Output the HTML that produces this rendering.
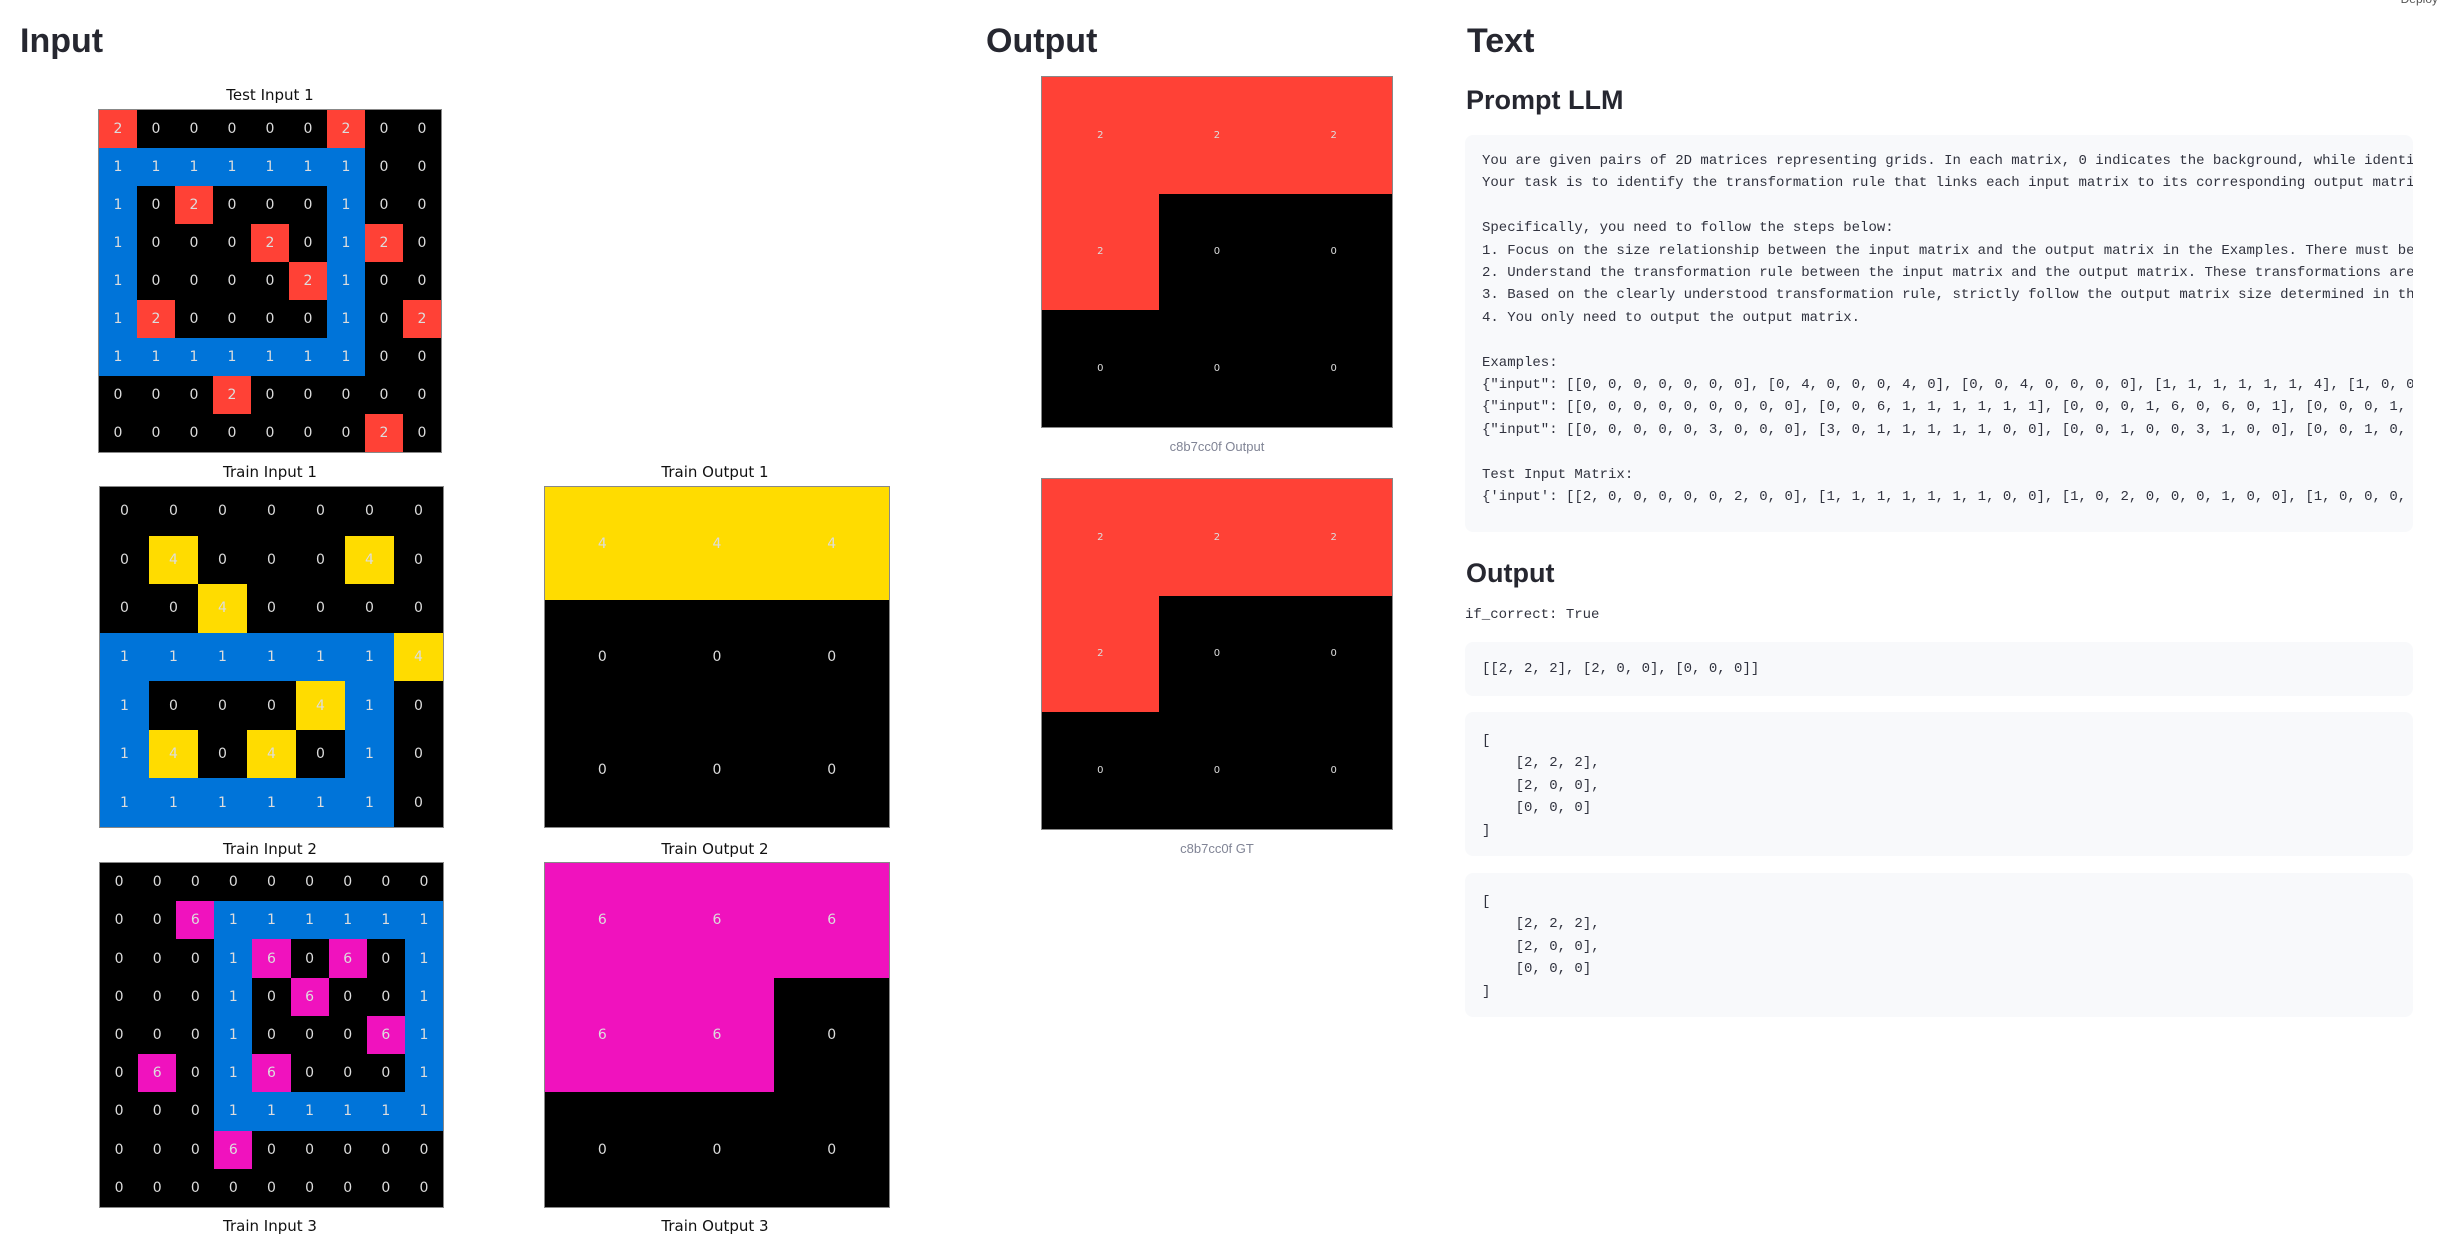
<!DOCTYPE html>
<html><head><meta charset="utf-8"><style>
*{margin:0;padding:0;box-sizing:border-box}
body{width:2442px;height:1229px;background:#fff;position:relative;overflow:hidden;font-family:"Liberation Sans","DejaVu Sans",sans-serif;color:#31333f}
.a{position:absolute}
h2{position:absolute;font-size:34px;font-weight:700;color:#262730;line-height:1}
h3{position:absolute;font-size:27px;font-weight:700;color:#262730;line-height:1}
.t{position:absolute;font-family:"DejaVu Sans",sans-serif;font-size:15px;color:#111;text-align:center;width:360px}
.g{position:absolute;display:grid;border:1px solid #888;font-family:"DejaVu Sans",sans-serif;font-size:14px;color:#ddd}
.g div{display:flex;align-items:center;justify-content:center;background:#000}
.g .b{background:#0074D9}.g .r{background:#FF4136}.g .y{background:#FFDC00}.g .m{background:#F012BE}
.g9{grid-template-columns:repeat(9,1fr);grid-template-rows:repeat(9,1fr)}
.g7{grid-template-columns:repeat(7,1fr);grid-template-rows:repeat(7,1fr)}
.g3{grid-template-columns:repeat(3,1fr);grid-template-rows:repeat(3,1fr)}
.sm{font-size:10px}
.cap{position:absolute;font-size:13px;color:#808495;text-align:center;width:352px}
.code{position:absolute;background:#f8f9fb;border-radius:8px;font-family:"Liberation Mono",monospace;font-size:14px;color:#31333f;white-space:pre;overflow:hidden;line-height:22.4px}
</style></head><body>
<div class="a" style="right:4px;top:-8px;font-size:12px;color:#555">Deploy</div>
<h2 style="left:20px;top:24px">Input</h2>
<h2 style="left:986px;top:24px">Output</h2>
<h2 style="left:1467px;top:24px">Text</h2>

<div class="t" style="left:90px;top:86px">Test Input 1</div>
<div class="g g9" style="left:98px;top:109px;width:344px;height:344px">
<div class="r">2</div><div>0</div><div>0</div><div>0</div><div>0</div><div>0</div><div class="r">2</div><div>0</div><div>0</div>
<div class="b">1</div><div class="b">1</div><div class="b">1</div><div class="b">1</div><div class="b">1</div><div class="b">1</div><div class="b">1</div><div>0</div><div>0</div>
<div class="b">1</div><div>0</div><div class="r">2</div><div>0</div><div>0</div><div>0</div><div class="b">1</div><div>0</div><div>0</div>
<div class="b">1</div><div>0</div><div>0</div><div>0</div><div class="r">2</div><div>0</div><div class="b">1</div><div class="r">2</div><div>0</div>
<div class="b">1</div><div>0</div><div>0</div><div>0</div><div>0</div><div class="r">2</div><div class="b">1</div><div>0</div><div>0</div>
<div class="b">1</div><div class="r">2</div><div>0</div><div>0</div><div>0</div><div>0</div><div class="b">1</div><div>0</div><div class="r">2</div>
<div class="b">1</div><div class="b">1</div><div class="b">1</div><div class="b">1</div><div class="b">1</div><div class="b">1</div><div class="b">1</div><div>0</div><div>0</div>
<div>0</div><div>0</div><div>0</div><div class="r">2</div><div>0</div><div>0</div><div>0</div><div>0</div><div>0</div>
<div>0</div><div>0</div><div>0</div><div>0</div><div>0</div><div>0</div><div>0</div><div class="r">2</div><div>0</div>
</div>

<div class="t" style="left:90px;top:463px">Train Input 1</div>
<div class="g g7" style="left:99px;top:486px;width:345px;height:342px">
<div>0</div><div>0</div><div>0</div><div>0</div><div>0</div><div>0</div><div>0</div>
<div>0</div><div class="y">4</div><div>0</div><div>0</div><div>0</div><div class="y">4</div><div>0</div>
<div>0</div><div>0</div><div class="y">4</div><div>0</div><div>0</div><div>0</div><div>0</div>
<div class="b">1</div><div class="b">1</div><div class="b">1</div><div class="b">1</div><div class="b">1</div><div class="b">1</div><div class="y">4</div>
<div class="b">1</div><div>0</div><div>0</div><div>0</div><div class="y">4</div><div class="b">1</div><div>0</div>
<div class="b">1</div><div class="y">4</div><div>0</div><div class="y">4</div><div>0</div><div class="b">1</div><div>0</div>
<div class="b">1</div><div class="b">1</div><div class="b">1</div><div class="b">1</div><div class="b">1</div><div class="b">1</div><div>0</div>
</div>
<div class="t" style="left:535px;top:463px">Train Output 1</div>
<div class="g g3" style="left:544px;top:486px;width:346px;height:342px">
<div class="y">4</div><div class="y">4</div><div class="y">4</div><div>0</div><div>0</div><div>0</div><div>0</div><div>0</div><div>0</div>
</div>

<div class="t" style="left:90px;top:840px">Train Input 2</div>
<div class="g g9" style="left:99px;top:862px;width:345px;height:346px">
<div>0</div><div>0</div><div>0</div><div>0</div><div>0</div><div>0</div><div>0</div><div>0</div><div>0</div>
<div>0</div><div>0</div><div class="m">6</div><div class="b">1</div><div class="b">1</div><div class="b">1</div><div class="b">1</div><div class="b">1</div><div class="b">1</div>
<div>0</div><div>0</div><div>0</div><div class="b">1</div><div class="m">6</div><div>0</div><div class="m">6</div><div>0</div><div class="b">1</div>
<div>0</div><div>0</div><div>0</div><div class="b">1</div><div>0</div><div class="m">6</div><div>0</div><div>0</div><div class="b">1</div>
<div>0</div><div>0</div><div>0</div><div class="b">1</div><div>0</div><div>0</div><div>0</div><div class="m">6</div><div class="b">1</div>
<div>0</div><div class="m">6</div><div>0</div><div class="b">1</div><div class="m">6</div><div>0</div><div>0</div><div>0</div><div class="b">1</div>
<div>0</div><div>0</div><div>0</div><div class="b">1</div><div class="b">1</div><div class="b">1</div><div class="b">1</div><div class="b">1</div><div class="b">1</div>
<div>0</div><div>0</div><div>0</div><div class="m">6</div><div>0</div><div>0</div><div>0</div><div>0</div><div>0</div>
<div>0</div><div>0</div><div>0</div><div>0</div><div>0</div><div>0</div><div>0</div><div>0</div><div>0</div>
</div>
<div class="t" style="left:535px;top:840px">Train Output 2</div>
<div class="g g3" style="left:544px;top:862px;width:346px;height:346px">
<div class="m">6</div><div class="m">6</div><div class="m">6</div><div class="m">6</div><div class="m">6</div><div>0</div><div>0</div><div>0</div><div>0</div>
</div>
<div class="t" style="left:90px;top:1217px">Train Input 3</div>
<div class="t" style="left:535px;top:1217px">Train Output 3</div>

<div class="g g3 sm" style="left:1041px;top:76px;width:352px;height:352px">
<div class="r">2</div><div class="r">2</div><div class="r">2</div><div class="r">2</div><div>0</div><div>0</div><div>0</div><div>0</div><div>0</div>
</div>
<div class="cap" style="left:1041px;top:439px">c8b7cc0f Output</div>
<div class="g g3 sm" style="left:1041px;top:478px;width:352px;height:352px">
<div class="r">2</div><div class="r">2</div><div class="r">2</div><div class="r">2</div><div>0</div><div>0</div><div>0</div><div>0</div><div>0</div>
</div>
<div class="cap" style="left:1041px;top:841px">c8b7cc0f GT</div>

<h3 style="left:1466px;top:87px">Prompt LLM</h3>
<div class="code" style="left:1465px;top:135px;width:948px;height:397px;padding:15px 0 0 17px">You are given pairs of 2D matrices representing grids. In each matrix, 0 indicates the background, while identi
Your task is to identify the transformation rule that links each input matrix to its corresponding output matri

Specifically, you need to follow the steps below:
1. Focus on the size relationship between the input matrix and the output matrix in the Examples. There must be
2. Understand the transformation rule between the input matrix and the output matrix. These transformations are
3. Based on the clearly understood transformation rule, strictly follow the output matrix size determined in th
4. You only need to output the output matrix.

Examples:
{"input": [[0, 0, 0, 0, 0, 0, 0], [0, 4, 0, 0, 0, 4, 0], [0, 0, 4, 0, 0, 0, 0], [1, 1, 1, 1, 1, 1, 4], [1, 0, 0
{"input": [[0, 0, 0, 0, 0, 0, 0, 0, 0], [0, 0, 6, 1, 1, 1, 1, 1, 1], [0, 0, 0, 1, 6, 0, 6, 0, 1], [0, 0, 0, 1,
{"input": [[0, 0, 0, 0, 0, 3, 0, 0, 0], [3, 0, 1, 1, 1, 1, 1, 0, 0], [0, 0, 1, 0, 0, 3, 1, 0, 0], [0, 0, 1, 0,

Test Input Matrix:
{'input': [[2, 0, 0, 0, 0, 0, 2, 0, 0], [1, 1, 1, 1, 1, 1, 1, 0, 0], [1, 0, 2, 0, 0, 0, 1, 0, 0], [1, 0, 0, 0,</div>

<h3 style="left:1466px;top:560px">Output</h3>
<div class="a" style="left:1465px;top:607px;font-family:'Liberation Mono',monospace;font-size:14px;color:#31333f">if_correct: True</div>
<div class="code" style="left:1465px;top:642px;width:948px;height:54px;padding:16px 0 0 17px">[[2, 2, 2], [2, 0, 0], [0, 0, 0]]</div>
<div class="code" style="left:1465px;top:712px;width:948px;height:144px;padding:18px 0 0 17px">[
    [2, 2, 2],
    [2, 0, 0],
    [0, 0, 0]
]</div>
<div class="code" style="left:1465px;top:873px;width:948px;height:144px;padding:18px 0 0 17px">[
    [2, 2, 2],
    [2, 0, 0],
    [0, 0, 0]
]</div>
</body></html>
